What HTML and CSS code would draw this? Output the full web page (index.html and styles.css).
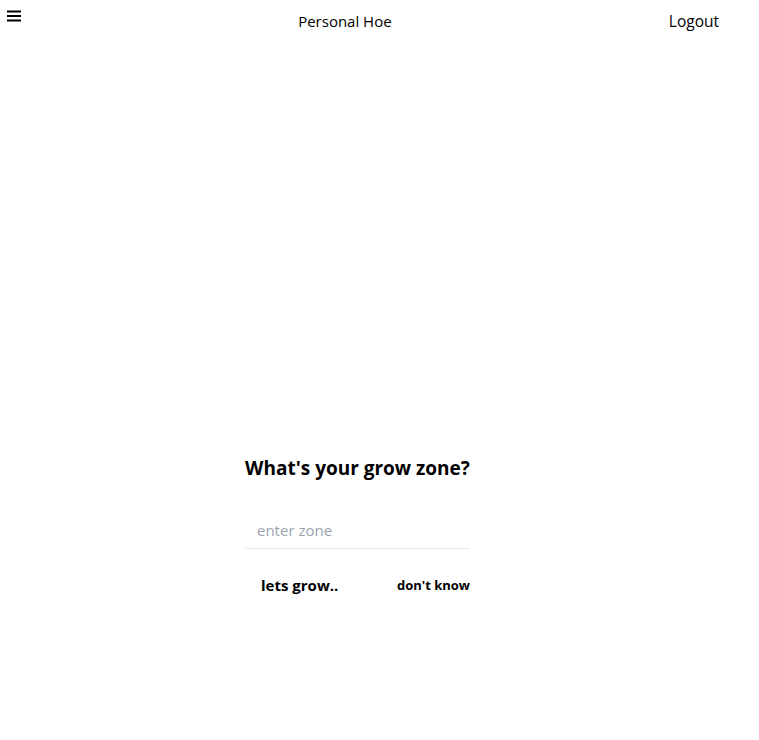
FILE: index.html
```html
<!DOCTYPE html>
<html lang="en">
<head>
<meta charset="utf-8">
<title>Personal Hoe</title>
<link rel="stylesheet" href="styles.css">
</head>
<body>
<header class="topbar">
  <button class="menu" aria-label="Menu">
    <svg width="14" height="12" viewBox="0 0 14 12"><rect x="0" y="0.5" width="14" height="2" fill="#000"/><rect x="0" y="5" width="14" height="2" fill="#000"/><rect x="0" y="9.5" width="14" height="2" fill="#000"/></svg>
  </button>
  <span class="title">Personal Hoe</span>
  <a class="logout" href="#">Logout</a>
</header>
<main class="main">
  <form class="zone-form">
    <h2 class="question">What's your grow zone?</h2>
    <input class="zone-input" type="text" placeholder="enter zone">
    <div class="actions">
      <button class="grow" type="button">lets grow..</button>
      <button class="unknown" type="button">don't know</button>
    </div>
  </form>
</main>
</body>
</html>
```

FILE: styles.css
```css
* { box-sizing: border-box; }
html, body { margin: 0; padding: 0; background: #fff; }
body {
  font-family: "Open Sans", "Noto Sans", sans-serif;
  color: #000;
  height: 740px;
}
.topbar {
  display: flex;
  justify-content: space-between;
  align-items: center;
  padding: 8px 40px 0 7px;
  height: 34px;
}
.menu {
  border: 0;
  background: none;
  padding: 0;
  width: 14px;
  height: 12px;
  display: flex;
  align-self: flex-start;
  margin-top: 2px;
}
.title {
  font-size: 15px;
  line-height: 22px;
}
.logout {
  color: #000;
  text-decoration: none;
  font-size: 15.5px;
  line-height: 22px;
}
.main {
  display: flex;
  justify-content: center;
  padding-top: 421px;
  padding-right: 44px;
}
.zone-form {
  width: 225px;
  display: flex;
  flex-direction: column;
}
.question {
  margin: 0;
  font-size: 19px;
  line-height: 26px;
  font-weight: 700;
  text-align: center;
  white-space: nowrap;
}
.zone-input {
  margin-top: 30px;
  border: 0;
  border-bottom: 1px solid #e5e7eb;
  padding: 0 12px;
  height: 38px;
  font-family: inherit;
  font-size: 15px;
  outline: none;
}
.zone-input::placeholder { color: #9ca3af; }
.actions {
  display: flex;
  justify-content: space-between;
  align-items: center;
  margin-top: 26px;
}
.actions button {
  border: 0;
  background: none;
  font-family: inherit;
  font-weight: 700;
  color: #000;
  padding: 0;
}
.grow { font-size: 15px; margin-left: 16px; }
.unknown { font-size: 13px; }
```
